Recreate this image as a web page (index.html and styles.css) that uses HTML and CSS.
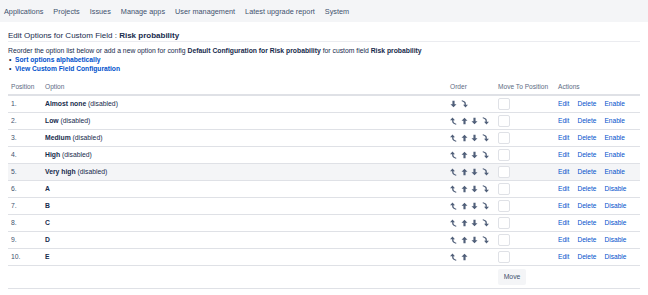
FILE: index.html
```html
<!DOCTYPE html>
<html lang="en">
<head>
    <meta charset="UTF-8">
    <title>Edit Options for Custom Field</title>
    <link rel="stylesheet" href="styles.css">
</head>
<body>
    <nav class="admin-nav">
        <a href="#">Applications</a>
        <a href="#">Projects</a>
        <a href="#">Issues</a>
        <a href="#">Manage apps</a>
        <a href="#">User management</a>
        <a href="#">Latest upgrade report</a>
        <a href="#">System</a>
    </nav>

    <div class="content">
        <h2 class="page-title">Edit Options for Custom Field : <strong>Risk probability</strong></h2>
        <p class="intro">Reorder the option list below or add a new option for config <strong>Default Configuration for Risk probability</strong> for custom field <strong>Risk probability</strong></p>
        <ul class="links">
            <li><a href="#">Sort options alphabetically</a></li>
            <li><a href="#">View Custom Field Configuration</a></li>
        </ul>

        <table class="options">
            <thead>
                <tr>
                    <th class="col-pos">Position</th>
                    <th class="col-opt">Option</th>
                    <th class="col-order">Order</th>
                    <th class="col-move">Move To Position</th>
                    <th class="col-actions">Actions</th>
                </tr>
            </thead>
            <tbody>
                <tr>
                    <td class="pos">1.</td>
                    <td><b>Almost none</b> (disabled)</td>
                    <td class="order">
                        <svg class="ico"><use href="#i-down"/></svg><svg class="ico"><use href="#i-last"/></svg>
                    </td>
                    <td><input class="pos-input" type="text"></td>
                    <td class="actions"><a href="#">Edit</a><a href="#">Delete</a><a href="#">Enable</a></td>
                </tr>
                <tr>
                    <td class="pos">2.</td>
                    <td><b>Low</b> (disabled)</td>
                    <td class="order">
                        <svg class="ico"><use href="#i-first"/></svg><svg class="ico"><use href="#i-up"/></svg><svg class="ico"><use href="#i-down"/></svg><svg class="ico"><use href="#i-last"/></svg>
                    </td>
                    <td><input class="pos-input" type="text"></td>
                    <td class="actions"><a href="#">Edit</a><a href="#">Delete</a><a href="#">Enable</a></td>
                </tr>
                <tr>
                    <td class="pos">3.</td>
                    <td><b>Medium</b> (disabled)</td>
                    <td class="order">
                        <svg class="ico"><use href="#i-first"/></svg><svg class="ico"><use href="#i-up"/></svg><svg class="ico"><use href="#i-down"/></svg><svg class="ico"><use href="#i-last"/></svg>
                    </td>
                    <td><input class="pos-input" type="text"></td>
                    <td class="actions"><a href="#">Edit</a><a href="#">Delete</a><a href="#">Enable</a></td>
                </tr>
                <tr>
                    <td class="pos">4.</td>
                    <td><b>High</b> (disabled)</td>
                    <td class="order">
                        <svg class="ico"><use href="#i-first"/></svg><svg class="ico"><use href="#i-up"/></svg><svg class="ico"><use href="#i-down"/></svg><svg class="ico"><use href="#i-last"/></svg>
                    </td>
                    <td><input class="pos-input" type="text"></td>
                    <td class="actions"><a href="#">Edit</a><a href="#">Delete</a><a href="#">Enable</a></td>
                </tr>
                <tr class="hover">
                    <td class="pos">5.</td>
                    <td><b>Very high</b> (disabled)</td>
                    <td class="order">
                        <svg class="ico"><use href="#i-first"/></svg><svg class="ico"><use href="#i-up"/></svg><svg class="ico"><use href="#i-down"/></svg><svg class="ico"><use href="#i-last"/></svg>
                    </td>
                    <td><input class="pos-input" type="text"></td>
                    <td class="actions"><a href="#">Edit</a><a href="#">Delete</a><a href="#">Enable</a></td>
                </tr>
                <tr>
                    <td class="pos">6.</td>
                    <td><b>A</b></td>
                    <td class="order">
                        <svg class="ico"><use href="#i-first"/></svg><svg class="ico"><use href="#i-up"/></svg><svg class="ico"><use href="#i-down"/></svg><svg class="ico"><use href="#i-last"/></svg>
                    </td>
                    <td><input class="pos-input" type="text"></td>
                    <td class="actions"><a href="#">Edit</a><a href="#">Delete</a><a href="#">Disable</a></td>
                </tr>
                <tr>
                    <td class="pos">7.</td>
                    <td><b>B</b></td>
                    <td class="order">
                        <svg class="ico"><use href="#i-first"/></svg><svg class="ico"><use href="#i-up"/></svg><svg class="ico"><use href="#i-down"/></svg><svg class="ico"><use href="#i-last"/></svg>
                    </td>
                    <td><input class="pos-input" type="text"></td>
                    <td class="actions"><a href="#">Edit</a><a href="#">Delete</a><a href="#">Disable</a></td>
                </tr>
                <tr>
                    <td class="pos">8.</td>
                    <td><b>C</b></td>
                    <td class="order">
                        <svg class="ico"><use href="#i-first"/></svg><svg class="ico"><use href="#i-up"/></svg><svg class="ico"><use href="#i-down"/></svg><svg class="ico"><use href="#i-last"/></svg>
                    </td>
                    <td><input class="pos-input" type="text"></td>
                    <td class="actions"><a href="#">Edit</a><a href="#">Delete</a><a href="#">Disable</a></td>
                </tr>
                <tr>
                    <td class="pos">9.</td>
                    <td><b>D</b></td>
                    <td class="order">
                        <svg class="ico"><use href="#i-first"/></svg><svg class="ico"><use href="#i-up"/></svg><svg class="ico"><use href="#i-down"/></svg><svg class="ico"><use href="#i-last"/></svg>
                    </td>
                    <td><input class="pos-input" type="text"></td>
                    <td class="actions"><a href="#">Edit</a><a href="#">Delete</a><a href="#">Disable</a></td>
                </tr>
                <tr>
                    <td class="pos">10.</td>
                    <td><b>E</b></td>
                    <td class="order">
                        <svg class="ico"><use href="#i-first"/></svg><svg class="ico"><use href="#i-up"/></svg>
                    </td>
                    <td><input class="pos-input" type="text"></td>
                    <td class="actions"><a href="#">Edit</a><a href="#">Delete</a><a href="#">Disable</a></td>
                </tr>
                <tr class="submit-row">
                    <td></td>
                    <td></td>
                    <td></td>
                    <td><button class="move-btn">Move</button></td>
                    <td></td>
                </tr>
            </tbody>
        </table>
    </div>

    <!-- arrow icons -->
    <svg class="defs" width="0" height="0">
        <defs>
            <symbol id="i-up" viewBox="0 0 10 12">
                <path d="M5 1 L9.5 5.5 H6.6 V11 H3.4 V5.5 H0.5 Z" fill="currentColor"/>
            </symbol>
            <symbol id="i-down" viewBox="0 0 10 12">
                <path d="M5 11 L9.5 6.5 H6.6 V1 H3.4 V6.5 H0.5 Z" fill="currentColor"/>
            </symbol>
            <symbol id="i-first" viewBox="0 0 10 12">
                <path d="M3.5 0.8 L7.2 4.8 H5 V6.8 Q5 8.2 6.6 9 L9.6 10.4 L8.6 11.6 L5.2 10 Q3 9 3 6.8 V4.8 H-0.2 Z" fill="currentColor"/>
            </symbol>
            <symbol id="i-last" viewBox="0 0 10 12">
                <path d="M6.5 11.2 L10.2 7.2 H7 V5.2 Q7 3 4.8 2 L1.4 0.4 L0.4 1.6 L3.4 3 Q5 3.8 5 5.2 V7.2 H2.8 Z" fill="currentColor"/>
            </symbol>
        </defs>
    </svg>
</body>
</html>
```

FILE: styles.css
```css
* {
    margin: 0;
    padding: 0;
    box-sizing: border-box;
}

body {
    font-family: "Liberation Sans", Arial, sans-serif;
    color: #172b4d;
    background: #ffffff;
}

a {
    color: #0052cc;
    text-decoration: none;
}

.admin-nav {
    display: flex;
    align-items: center;
    gap: 10px;
    height: 22px;
    padding-left: 4px;
    background: #f4f5f7;
}

.admin-nav a {
    color: #42526e;
    font-size: 7.3px;
}

.content {
    padding: 0 8px;
}

.page-title {
    margin-top: 8px;
    font-size: 8px;
    font-weight: normal;
    line-height: 11px;
    border-bottom: 1px solid #ebecf0;
}

.page-title strong {
    font-weight: bold;
}

.intro {
    margin-top: 4px;
    font-size: 6.8px;
    line-height: 9px;
}

.links {
    list-style: none;
}

.links li {
    font-size: 6.7px;
    line-height: 9px;
    font-weight: bold;
}

.links li::before {
    content: "\2022";
    display: inline-block;
    width: 6px;
    padding-left: 1px;
    color: #172b4d;
}

.options {
    width: 100%;
    margin-top: 6px;
    border-collapse: collapse;
}

.options th {
    height: 16px;
    padding: 0 3px;
    font-size: 6.6px;
    font-weight: normal;
    color: #5e6c84;
    text-align: left;
    border-bottom: 2px solid #dfe1e6;
}

.options td {
    height: 17px;
    padding: 0 3px;
    font-size: 6.8px;
    border-bottom: 1px solid #dfe1e6;
    vertical-align: middle;
}

.options td.pos {
    color: #42526e;
}

.col-pos { width: 34px; }
.col-order { width: 47px; }
.col-move { width: 60px; }
.col-actions { width: 85px; }

.options tr.hover td {
    background: #f4f5f7;
}

.order {
    color: #505f79;
    white-space: nowrap;
}

.ico {
    width: 7px;
    height: 8px;
    margin-right: 3.5px;
    vertical-align: middle;
}

.pos-input {
    display: block;
    width: 12px;
    height: 12px;
    border: 1px solid #dfe1e6;
    border-radius: 2px;
    background: #ffffff;
}

.actions a {
    font-size: 6.6px;
    margin-right: 8px;
}

.submit-row td {
    height: 23px;
}

.move-btn {
    display: block;
    width: 28px;
    height: 16px;
    border: none;
    border-radius: 2px;
    background: #f4f5f7;
    color: #42526e;
    font-family: "Liberation Sans", Arial, sans-serif;
    font-size: 6.8px;
}

.defs {
    position: absolute;
}
```
